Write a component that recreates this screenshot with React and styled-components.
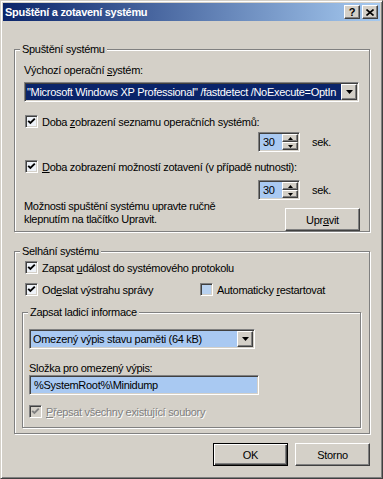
import React from "react";
import styled, { createGlobalStyle, css } from "styled-components";

const GlobalStyle = createGlobalStyle`
  html, body {
    margin: 0;
    padding: 0;
    background: #d4d0c8;
  }
  body {
    font-family: "Liberation Sans", Arial, sans-serif;
    font-size: 11px;
    letter-spacing: -0.3px;
    color: #000;
  }
  * {
    box-sizing: border-box;
  }
`;

const raised = css`
  background: #d4d0c8;
  border: 1px solid;
  border-color: #fff #404040 #404040 #fff;
  box-shadow: inset -1px -1px #808080;
`;

const sunken = css`
  border: 1px solid;
  border-color: #808080 #fff #fff #808080;
  box-shadow: inset 1px 1px #404040, inset -1px -1px #d4d0c8;
`;

const Window = styled.div`
  width: 383px;
  height: 479px;
  background: #d4d0c8;
  border: 1px solid;
  border-color: #d4d0c8 #404040 #404040 #d4d0c8;
  box-shadow: inset 1px 1px #fff, inset -1px -1px #808080;
  padding: 2px;
  display: flex;
  flex-direction: column;
`;

const TitleBar = styled.div`
  height: 18px;
  display: flex;
  align-items: center;
  padding: 0 2px 0 2px;
  background: linear-gradient(to right, #0a246a, #a6caf0);
  color: #fff;
  font-weight: bold;
`;

const TitleText = styled.div`
  flex: 1;
`;

const CaptionButton = styled.div`
  ${raised};
  width: 16px;
  height: 14px;
  margin-left: 2px;
  display: flex;
  align-items: center;
  justify-content: center;
  color: #000;
  font-size: 11px;
  font-weight: bold;
  line-height: 12px;
`;

const Body = styled.div`
  padding: 28px 10px 0 11px;
  display: flex;
  flex-direction: column;
`;

const Frame = styled.div`
  border: 1px solid #808080;
  box-shadow: inset 1px 1px #fff, 1px 1px #fff;
  margin-top: ${(p) => p.$top || 0}px;
`;

const Legend = styled.div`
  display: table;
  margin: -7px 0 0 5px;
  padding: 0 2px;
  line-height: 13px;
  background: #d4d0c8;
`;

const FrameBody = styled.div`
  display: flex;
  flex-direction: column;
  padding: ${(p) => p.$pad};
`;

const Label = styled.div`
  line-height: 13px;
  margin-top: ${(p) => p.$top || 0}px;
  white-space: nowrap;
`;

const Combo = styled.div`
  ${sunken};
  width: ${(p) => p.$w}px;
  height: 20px;
  padding: 1px;
  margin-top: ${(p) => p.$top || 0}px;
  display: flex;
  background: #fff;
`;

const ComboValue = styled.div`
  flex: 1;
  overflow: hidden;
  white-space: nowrap;
  line-height: 16px;
  padding-left: ${(p) => (p.$selected ? 1 : 2)}px;
  background: ${(p) => (p.$selected ? "#0a246a" : "#a9c9f2")};
  color: ${(p) => (p.$selected ? "#fff" : "#000")};
`;

const ArrowButton = styled.div`
  ${raised};
  width: 16px;
  height: 16px;
  flex-shrink: 0;
  display: flex;
  align-items: center;
  justify-content: center;
`;

const CheckRow = styled.div`
  display: flex;
  align-items: center;
  height: 13px;
  margin-top: ${(p) => p.$top || 0}px;
  margin-left: ${(p) => p.$left || 0}px;
`;

const CheckItem = styled.div`
  display: flex;
  align-items: center;
  width: ${(p) => (p.$w ? `${p.$w}px` : "auto")};
  color: ${(p) => (p.$disabled ? "#808080" : "#000")};
  text-shadow: ${(p) => (p.$disabled ? "1px 1px #fff" : "none")};
  white-space: nowrap;
`;

const Box = styled.div`
  ${sunken};
  width: 13px;
  height: 13px;
  flex-shrink: 0;
  margin-right: 4px;
  display: flex;
  align-items: center;
  justify-content: center;
  background: ${(p) => p.$bg};
`;

const SpinRow = styled.div`
  display: flex;
  align-items: center;
  padding-left: 234px;
  margin-top: ${(p) => p.$top || 0}px;
`;

const Spin = styled.div`
  ${sunken};
  width: 42px;
  height: 20px;
  padding: 1px;
  display: flex;
  background: #a9c9f2;
`;

const SpinValue = styled.div`
  flex: 1;
  line-height: 16px;
  padding-left: 3px;
`;

const SpinButtons = styled.div`
  width: 16px;
  display: flex;
  flex-direction: column;
`;

const SpinButton = styled.div`
  ${raised};
  flex: 1;
  display: flex;
  align-items: center;
  justify-content: center;
`;

const Unit = styled.span`
  margin-left: 12px;
`;

const EditRow = styled.div`
  display: flex;
  justify-content: space-between;
  align-items: flex-start;
`;

const Hint = styled.div`
  line-height: 13px;
`;

const Button = styled.div`
  ${raised};
  width: 75px;
  height: 23px;
  margin-top: ${(p) => p.$top || 0}px;
  display: flex;
  align-items: center;
  justify-content: center;
  ${(p) =>
    p.$default &&
    css`
      border: 1px solid #000;
      box-shadow: inset 1px 1px #fff, inset -1px -1px #404040,
        inset -2px -2px #808080;
    `}
`;

const Field = styled.div`
  ${sunken};
  width: ${(p) => p.$w}px;
  height: 20px;
  padding: 1px 4px;
  line-height: 16px;
  background: #a9c9f2;
  white-space: nowrap;
`;

const ButtonRow = styled.div`
  display: flex;
  justify-content: flex-end;
  gap: 7px;
  margin-top: 9px;
`;

function Check({ checked = true, disabled = false, w, children }) {
  const bg = disabled ? "#d4d0c8" : checked ? "#eef2f8" : "#b8d1ef";
  return (
    <CheckItem $w={w} $disabled={disabled}>
      <Box $bg={bg}>
        {checked && (
          <svg width="9" height="9" viewBox="0 0 9 9">
            <polyline
              points="1.2,3.8 3.4,6 7.8,1.6"
              fill="none"
              stroke={disabled ? "#808080" : "#000"}
              strokeWidth="1.9"
            />
          </svg>
        )}
      </Box>
      <span>{children}</span>
    </CheckItem>
  );
}

function DownArrow({ size = 7 }) {
  const h = Math.ceil(size / 2);
  return (
    <svg width={size} height={h} viewBox={`0 0 ${size} ${h}`}>
      <polygon points={`0,0 ${size},0 ${size / 2},${h}`} fill="#000" />
    </svg>
  );
}

function UpArrow({ size = 5 }) {
  const h = Math.ceil(size / 2);
  return (
    <svg width={size} height={h} viewBox={`0 0 ${size} ${h}`}>
      <polygon points={`0,${h} ${size},${h} ${size / 2},0`} fill="#000" />
    </svg>
  );
}

function Spinner({ value }) {
  return (
    <Spin>
      <SpinValue>{value}</SpinValue>
      <SpinButtons>
        <SpinButton>
          <UpArrow />
        </SpinButton>
        <SpinButton>
          <DownArrow size={5} />
        </SpinButton>
      </SpinButtons>
    </Spin>
  );
}

function Dropdown({ w, top, selected, children }) {
  return (
    <Combo $w={w} $top={top}>
      <ComboValue $selected={selected}>{children}</ComboValue>
      <ArrowButton>
        <DownArrow />
      </ArrowButton>
    </Combo>
  );
}

export default function App() {
  return (
    <>
      <GlobalStyle />
      <Window>
        <TitleBar>
          <TitleText>Spuštění a zotavení systému</TitleText>
          <CaptionButton>?</CaptionButton>
          <CaptionButton>
            <svg width="8" height="7" viewBox="0 0 8 7">
              <path d="M0.5 0.5 L7.5 6.5 M7.5 0.5 L0.5 6.5" stroke="#000" strokeWidth="1.6" />
            </svg>
          </CaptionButton>
        </TitleBar>
        <Body>
          <Frame>
            <Legend>Spuštění systému</Legend>
            <FrameBody $pad="8px 9px 0 9px">
              <Label>
                Výchozí operační <u>s</u>ystém:
              </Label>
              <Dropdown w={335} top={5} selected>
                "Microsoft Windows XP Professional" /fastdetect /NoExecute=OptIn
              </Dropdown>
              <CheckRow $top={13} $left={1}>
                <Check>
                  Doba <u>z</u>obrazení seznamu operačních systémů:
                </Check>
              </CheckRow>
              <SpinRow $top={4}>
                <Spinner value="30" />
                <Unit>sek.</Unit>
              </SpinRow>
              <CheckRow $top={8} $left={1}>
                <Check>
                  <u>D</u>oba zobrazení možností zotavení (v případě nutnosti):
                </Check>
              </CheckRow>
              <SpinRow $top={7}>
                <Spinner value="30" />
                <Unit>sek.</Unit>
              </SpinRow>
              <EditRow>
                <Hint>
                  Možnosti spuštění systému upravte ručně
                  <br />
                  klepnutím na tlačítko Upravit.
                </Hint>
                <Button $top={8}>
                  <span>
                    Upr<u>a</u>vit
                  </span>
                </Button>
              </EditRow>
            </FrameBody>
          </Frame>

          <Frame $top={19}>
            <Legend>Selhání systému</Legend>
            <FrameBody $pad="3px 8px 5px 7px">
              <CheckRow $left={3}>
                <Check>
                  Zapsat <u>u</u>dálost do systémového protokolu
                </Check>
              </CheckRow>
              <CheckRow $top={9} $left={3}>
                <Check w={175}>
                  Od<u>e</u>slat výstrahu správy
                </Check>
                <Check checked={false}>
                  Automaticky <u>r</u>estartovat
                </Check>
              </CheckRow>
              <Frame $top={16}>
                <Legend>Zapsat ladicí informace</Legend>
                <FrameBody $pad="10px 6px 9px 6px">
                  <Dropdown w={226}>Omezený výpis stavu paměti (64 kB)</Dropdown>
                  <Label $top={13}>Složka pro omezený výpis:</Label>
                  <Field $w={230}>%SystemRoot%\Minidump</Field>
                  <CheckRow $top={10}>
                    <Check disabled>
                      <u>P</u>řepsat všechny existující soubory
                    </Check>
                  </CheckRow>
                </FrameBody>
              </Frame>
            </FrameBody>
          </Frame>

          <ButtonRow>
            <Button $default>OK</Button>
            <Button>Storno</Button>
          </ButtonRow>
        </Body>
      </Window>
    </>
  );
}
